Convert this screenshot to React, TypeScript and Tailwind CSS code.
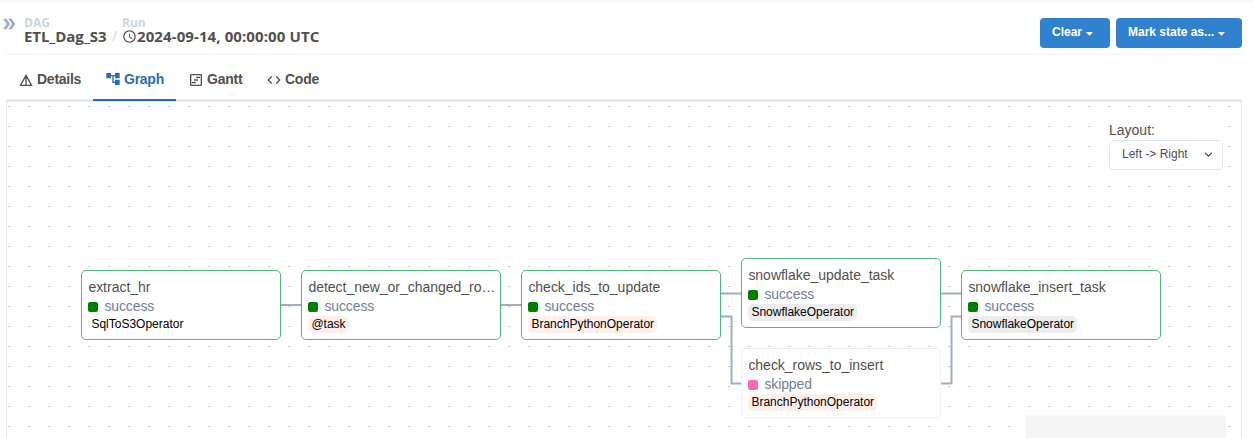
import { MdAccountTree, MdArrowDropDown, MdCode, MdDetails, MdDoubleArrow, MdOutlineSchedule, MdOutlineViewTimeline } from "react-icons/md";
import type { ReactNode } from "react";

type TaskProps = {
  position: string;
  name: string;
  operator: string;
  tint: string;
  state?: "success" | "skipped";
};

function TaskNode({ position, name, operator, tint, state = "success" }: TaskProps) {
  const ok = state === "success";
  return (
    <div className={`absolute h-[70px] w-[200px] rounded-[5px] border bg-white pt-[6px] pl-[6.2px] ${ok ? "border-[#48bb78]" : "border-[#edf2f7]"} ${position}`}>
      <div className="text-[14px] leading-[20px] tracking-[-0.02px] whitespace-nowrap text-[#51504f]">{name}</div>
      <div className="flex h-[19px] items-center gap-[6px]">
        <span className={`size-[10px] rounded-[2px] ${ok ? "bg-[#008000]" : "bg-[#ff69b4]"}`} />
        <span className="text-[14px] leading-[19px] tracking-[-0.1px] text-[#718096]">{state}</span>
      </div>
      <div className={`flex h-[17px] w-fit items-center rounded-[5px] px-[3px] text-[12px] leading-[15px] text-black ${tint}`}>
        <span className="-mt-px">{operator}</span>
      </div>
    </div>
  );
}

function Tab({ icon, label, className, active = false }: { icon: ReactNode; label: string; className: string; active?: boolean }) {
  return (
    <div className={`flex h-[43px] items-center gap-[3px] border-b-2 text-[14px] font-bold ${active ? "border-[#2b6cb0] text-[#2b6cb0]" : "border-transparent text-[#51504f]"} ${className}`}>
      {icon}
      <span className="leading-[20px] tracking-[-0.25px]">{label}</span>
    </div>
  );
}

export default function App() {
  return (
    <div className="flex h-[438px] w-[1254px] flex-col overflow-hidden bg-[linear-gradient(#f8f8f8,#ffffff_5px)] pl-[6px] pr-[12px] font-['Liberation_Sans',Arial,sans-serif]">
      <header className="flex h-[55px] shrink-0 items-start border-b border-[#edf2f7]">
        <MdDoubleArrow className="-ml-[6px] mt-[15px] size-[18px] shrink-0 text-[#a0aec0]" />
        <div className="ml-[6px] flex pt-[15px] font-['Open_Sans',sans-serif] font-bold">
          <div className="w-[82px]">
            <div className="h-[13px] text-[12px] leading-[16px] text-[#cbd5e0]">DAG</div>
            <div className="text-[15px] leading-[16px] tracking-[-0.1px] whitespace-nowrap text-[#51504f]">ETL_Dag_S3</div>
          </div>
          <div className="w-[16px] pt-[13px] pl-[6px] text-[14px] leading-[15px] font-normal text-[#cbd5e0]">/</div>
          <div>
            <div className="h-[13px] text-[12px] leading-[16px] text-[#cbd5e0]">Run</div>
            <div className="flex items-center text-[15px] leading-[16px] tracking-[0.1px] whitespace-nowrap text-[#51504f]">
              <MdOutlineSchedule className="mt-px size-[15px]" />
              <span>2024-09-14, 00:00:00 UTC</span>
            </div>
          </div>
        </div>
        <div className="ml-auto flex gap-[6px] pt-[18px] text-[12px] font-bold text-white">
          <button className="flex h-[30px] w-[70px] items-center rounded-[4px] bg-[#3182ce] pb-[2px] pl-[12px]">
            Clear<MdArrowDropDown className="-ml-px mt-[3px] size-[17px]" />
          </button>
          <button className="flex h-[30px] w-[126px] items-center rounded-[4px] bg-[#3182ce] pb-[2px] pl-[12px] whitespace-nowrap">
            Mark state as...<MdArrowDropDown className="-ml-px mt-[3px] size-[17px]" />
          </button>
        </div>
      </header>

      <nav className="flex h-[47px] shrink-0 items-end border-b-[3px] border-[#e2e8f0]">
        <Tab className="-mb-[2px] w-[87px] pl-[12px]" icon={<MdDetails className="mt-[2px] size-[16px]" />} label="Details" />
        <Tab className="-mb-[2px] w-[83px] pl-[12px]" icon={<MdAccountTree className="mt-px size-[16px]" />} label="Graph" active />
        <Tab className="-mb-[2px] w-[78px] pl-[12px]" icon={<MdOutlineViewTimeline className="mt-[2px] size-[16px]" />} label="Gantt" />
        <Tab className="-mb-[2px] w-[80px] pl-[12px]" icon={<MdCode className="mt-[2px] size-[16px]" />} label="Code" />
      </nav>

      <main className="relative min-h-0 flex-1 overflow-hidden border-x border-[#e2e8f0]">
        <svg className="absolute -left-[7px] -top-[102px] h-[438px] w-[1254px]" viewBox="0 0 1254 438">
          <defs>
            <pattern id="dots" x="8" y="106" width="20" height="20" patternUnits="userSpaceOnUse">
              <rect width="1" height="1" fill="#dddddf" />
              <rect x="1" width="1" height="1" fill="#a0a0a4" />
            </pattern>
          </defs>
          <rect x="7" y="103" width="1234" height="335" fill="url(#dots)" />
          <g fill="none" stroke="#a0aec0" strokeWidth="2">
            <path d="M281 305H302M501 305H522M721 293.5H742M941 293.5H962M721 316.5H731.5V383.5H742M941 383.5H951.5V316.5H962" />
          </g>
        </svg>

        <TaskNode position="left-[74.2px] top-[168px]" name="extract_hr" operator="SqlToS3Operator" tint="bg-white" />
        <TaskNode position="left-[294.2px] top-[168px]" name="detect_new_or_changed_ro…" operator="@task" tint="bg-[#ffefeb]" />
        <TaskNode position="left-[514.2px] top-[168px]" name="check_ids_to_update" operator="BranchPythonOperator" tint="bg-[#ffefeb]" />
        <TaskNode position="left-[734.2px] top-[156.4px]" name="snowflake_update_task" operator="SnowflakeOperator" tint="bg-[#ededed]" />
        <TaskNode position="left-[734.2px] top-[246.4px]" name="check_rows_to_insert" operator="BranchPythonOperator" tint="bg-[#ffefeb]" state="skipped" />
        <TaskNode position="left-[954.2px] top-[168px]" name="snowflake_insert_task" operator="SnowflakeOperator" tint="bg-[#ededed]" />

        <div className="absolute left-[1102px] top-[19px] w-[114px] bg-white/80 text-[#51504f]">
          <div className="h-[19px] text-[14px] leading-[19px]">Layout:</div>
          <div className="flex h-[30px] items-center justify-between rounded-[4px] border border-[#e2e8f0] pr-[6px] pb-[2px] pl-[12px] text-[12px]">
            <span>Left -&gt; Right</span>
            <svg className="mt-px size-[15px]" viewBox="0 0 24 24" fill="currentColor">
              <path d="M16.59 8.59L12 13.17 7.41 8.59 6 10l6 6 6-6z" />
            </svg>
          </div>
        </div>
        <div className="absolute left-[1019px] top-[313px] h-[40px] w-[200px] bg-[#f5f5f5]" />
      </main>
    </div>
  );
}
